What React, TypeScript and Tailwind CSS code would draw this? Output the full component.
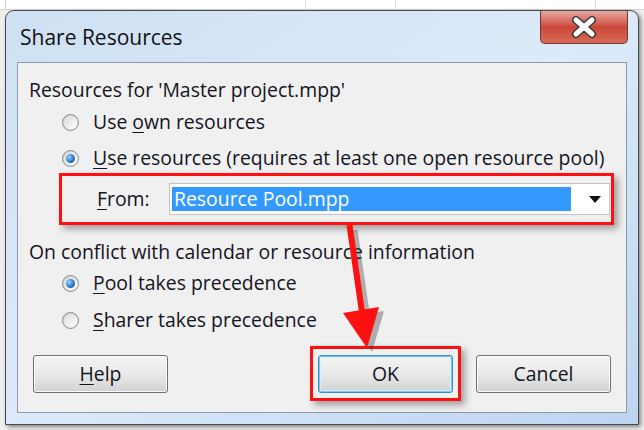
import React from "react";

const font = { fontFamily: '"Open Sans", "Noto Sans", "Liberation Sans", sans-serif' };

function Radio({ checked }: { checked?: boolean }) {
  return (
    <span className="flex h-[17px] w-[17px] shrink-0 items-center justify-center rounded-full border border-[#8a8a8a] bg-gradient-to-br from-[#c9c9c9] to-[#f6f6f6]">
      <span className="flex h-[13px] w-[13px] items-center justify-center rounded-full bg-gradient-to-br from-[#dcdcdc] to-[#ffffff]">
        {checked && (
          <span className="h-[9px] w-[9px] rounded-full bg-[radial-gradient(circle_at_35%_35%,#9ad8ff,#2a78c8_55%,#124a8a)]" />
        )}
      </span>
    </span>
  );
}

function Key({ children }: { children: string }) {
  return <span className="underline underline-offset-[3px] decoration-1">{children}</span>;
}

function Option({ checked, label }: { checked?: boolean; label: React.ReactNode }) {
  return (
    <div className="flex items-center gap-[14px] pl-[44px]">
      <Radio checked={checked} />
      <span>{label}</span>
    </div>
  );
}

function WinButton({ children, focused }: { children: React.ReactNode; focused?: boolean }) {
  return (
    <button
      className={`flex h-[38px] w-[135px] items-center justify-center rounded-[3px] border bg-gradient-to-b from-[#f4f4f4] via-[#e9e9e9] to-[#d2d2d2] text-[#14141f] ${
        focused
          ? "border-[#3c8fc4] shadow-[inset_0_0_0_1px_#7cc8ec,inset_0_0_0_2px_#d6eef9]"
          : "border-[#707070] shadow-[inset_0_0_0_1px_#fcfcfc]"
      }`}
    >
      {children}
    </button>
  );
}

export default function App() {
  return (
    <div className="relative h-[430px] w-[644px] overflow-hidden bg-[#efefef]" style={font}>
      {/* spreadsheet behind the dialog */}
      <div className="flex h-[10px] border-b border-[#d6d6d6] bg-white">
        <div className="w-[6px] border-r border-[#d0d0d0]" />
        <div className="w-[300px] border-r border-[#dcdcdc]" />
        <div className="w-[90px] border-r border-[#dcdcdc]" />
        <div className="w-[200px] border-r border-[#dcdcdc]" />
      </div>

      <div className="ml-[5px] flex h-[415px] w-[634px] flex-col rounded-t-[9px] border border-[#4a4a4a] bg-gradient-to-br from-[#cfe0f4] via-[#dceaf9] to-[#bcd5f0] px-[11px] pb-[11px] shadow-[2px_2px_4px_rgba(0,0,0,0.45)]">
        <div className="flex h-[51px] items-start justify-between">
          <div className="pl-[3px] pt-[11px] text-[21px] text-[#111]">Share Resources</div>
          <div className="-mr-[1px] flex h-[33px] w-[88px] items-center justify-center rounded-b-[5px] border border-t-0 border-[#6b3a34] bg-gradient-to-b from-[#e6a9a0] via-[#c9473a] to-[#d96a55]">
            <svg width="30" height="24" viewBox="0 0 30 24">
              <path d="M7 5 L23 19 M23 5 L7 19" stroke="#3b3b3b" strokeWidth="8" strokeLinecap="round" />
              <path d="M7 5 L23 19 M23 5 L7 19" stroke="#ffffff" strokeWidth="5" strokeLinecap="round" />
            </svg>
          </div>
        </div>

        <div className="flex flex-1 flex-col border border-[#8d99a8] bg-[#f0f0f0] text-[19.4px] text-[#14141f]">
          <div className="pl-[11px] pt-[15px] leading-[24px]">Resources for 'Master project.mpp'</div>
          <div className="mt-[8px] leading-[24px]">
            <Option label={<>Use <Key>o</Key>wn resources</>} />
          </div>
          <div className="mt-[12px] leading-[24px]">
            <Option checked label={<><Key>U</Key>se resources (requires at least one open resource pool)</>} />
          </div>

          <div className="ml-[41px] mr-[12px] mt-[3px] flex h-[52px] items-center border-[3px] border-[#ff1010] pr-[1px] shadow-[4px_4px_7px_rgba(0,0,0,0.35)]">
            <span className="w-[107px] pl-[35px]"><Key>F</Key>rom:</span>
            <div className="flex h-[32px] flex-1 items-center border border-[#c4c4c4] bg-white pl-[2px] pr-[8px]">
              <div className="flex h-[24px] flex-1 items-center bg-[#3399ff] pl-[2px] text-white">Resource Pool.mpp</div>
              <svg className="ml-[18px]" width="12" height="7" viewBox="0 0 12 7">
                <path d="M0 0 H12 L6 7 Z" fill="#111" />
              </svg>
            </div>
          </div>

          <div className="mt-[15px] pl-[11px] leading-[24px]">On conflict with calendar or resource information</div>
          <div className="mt-[7px] leading-[24px]">
            <Option checked label={<><Key>P</Key>ool takes precedence</>} />
          </div>
          <div className="mt-[13px] leading-[24px]">
            <Option label={<><Key>S</Key>harer takes precedence</>} />
          </div>

          <div className="mt-[14px] flex items-center justify-between pl-[15px] pr-[15px]">
            <WinButton><Key>H</Key>elp</WinButton>
            <div className="flex items-center gap-[15px]">
              <div className="flex h-[55px] w-[151px] items-center justify-center border-[3px] border-[#ff1010] shadow-[4px_4px_7px_rgba(0,0,0,0.35)]">
                <WinButton focused>OK</WinButton>
              </div>
              <WinButton>Cancel</WinButton>
            </div>
          </div>
        </div>
      </div>

      {/* red arrow pointing to OK */}
      <svg className="pointer-events-none absolute left-0 top-0" width="644" height="430" viewBox="0 0 644 430">
        <g transform="translate(5 4)" opacity="0.35">
          <path d="M349.5 226 L362 312" stroke="#333" strokeWidth="6" />
          <path d="M343 313 L379 307 L367 348 Z" fill="#333" />
        </g>
        <path d="M349.5 225 L362 312" stroke="#ff1010" strokeWidth="6" />
        <path d="M343 313 L379 307 L367 348 Z" fill="#ff1010" />
      </svg>
    </div>
  );
}
